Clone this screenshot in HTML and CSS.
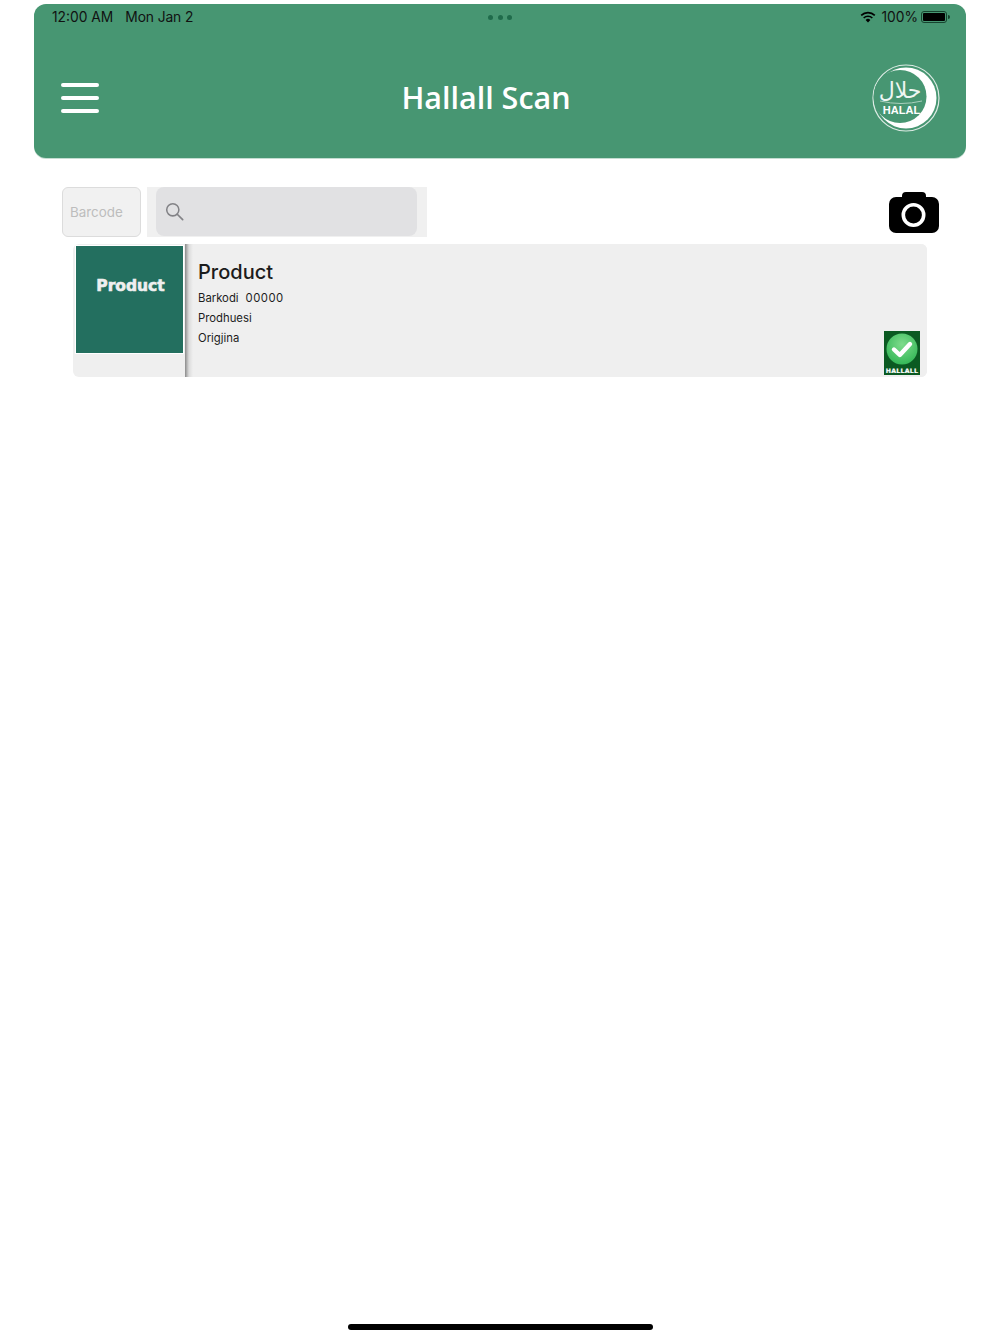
FILE: index.html
```html
<!DOCTYPE html>
<html lang="sq">
<head>
    <meta charset="UTF-8">
    <meta name="viewport" content="width=device-width, initial-scale=1.0">
    <title>Hallall Scan</title>
    <link rel="stylesheet" href="styles.css">
</head>
<body>
    <header class="top">
        <div class="status">
            <div class="status-left">
                <span>12:00 AM</span>
                <span class="date">Mon Jan 2</span>
            </div>
            <div class="dots"><i></i><i></i><i></i></div>
            <div class="status-right">
                <svg class="wifi" viewBox="0 0 16 12" width="16" height="12">
                    <path d="M8 11.6 5.6 9a3.4 3.4 0 0 1 4.8 0Z" fill="#000"/>
                    <path d="M3.7 7a6.2 6.2 0 0 1 8.6 0" fill="none" stroke="#000" stroke-width="1.7"/>
                    <path d="M1.2 4.3a9.8 9.8 0 0 1 13.6 0" fill="none" stroke="#000" stroke-width="1.7"/>
                </svg>
                <span>100%</span>
                <div class="battery"><div class="battery-fill"></div></div>
                <div class="battery-nub"></div>
            </div>
        </div>
        <div class="nav">
            <div class="menu"><span></span><span></span><span></span></div>
            <h1>Hallall Scan</h1>
            <svg class="logo" viewBox="0 0 68 68" width="68" height="68">
                <circle cx="34" cy="34" r="33" fill="none" stroke="#dcebe4" stroke-width="1.2"/>
                <circle cx="34" cy="34" r="30.5" fill="#fff"/>
                <circle cx="28" cy="32.5" r="26.5" fill="#479672"/>
                <text x="28" y="34" class="logo-ar" text-anchor="middle">حلال</text>
                <path d="M8 37q21 5 42 0" fill="none" stroke="#a9d0bd" stroke-width="1"/>
                <text x="29.5" y="50" class="logo-en" text-anchor="middle">HALAL</text>
            </svg>
        </div>
    </header>

    <main class="content">
        <div class="search-row">
            <div class="barcode">Barcode</div>
            <div class="search-wrap">
                <div class="search-box">
                    <svg viewBox="0 0 20 20" width="19" height="19">
                        <circle cx="8.2" cy="8.2" r="6.4" fill="none" stroke="#828286" stroke-width="1.6"/>
                        <path d="M12.9 12.9 18.6 18.6" stroke="#828286" stroke-width="1.8" stroke-linecap="round"/>
                    </svg>
                </div>
            </div>
            <svg class="camera" viewBox="0 0 50 41" width="50" height="41">
                <path fill="#000" d="M17 0h16a4 4 0 0 1 4 4v1h6a7 7 0 0 1 7 7v22a7 7 0 0 1-7 7H7a7 7 0 0 1-7-7V12a7 7 0 0 1 7-7h6V4a4 4 0 0 1 4-4Z"/>
                <circle cx="24.5" cy="23" r="10.2" fill="none" stroke="#fff" stroke-width="3.6"/>
            </svg>
        </div>

        <section class="card">
            <div class="thumb-col">
                <div class="thumb">Product</div>
            </div>
            <div class="info">
                <div class="info-text">
                    <h2>Product</h2>
                    <p><span class="label">Barkodi</span><span class="code">00000</span></p>
                    <p>Prodhuesi</p>
                    <p>Origjina</p>
                </div>
                <svg class="badge" viewBox="0 0 36 44" width="36" height="44">
                    <defs>
                        <radialGradient id="badgeGreen" cx="50%" cy="35%" r="65%">
                            <stop offset="0" stop-color="#7fdc8c"/>
                            <stop offset="1" stop-color="#35b858"/>
                        </radialGradient>
                    </defs>
                    <rect width="36" height="44" fill="#0b5a22"/>
                    <circle cx="18" cy="18" r="15.5" fill="url(#badgeGreen)"/>
                    <path d="M10 18.5 15.8 24 26 13" fill="none" stroke="#fff" stroke-width="4.4" stroke-linecap="round" stroke-linejoin="round"/>
                    <text x="18" y="41.5" class="badge-text" text-anchor="middle">HALLALL</text>
                </svg>
            </div>
        </section>
    </main>

    <div class="home-bar"></div>
</body>
</html>
```

FILE: styles.css
```css
html, body {
    margin: 0;
    padding: 0;
}
body {
    height: 1334px;
    overflow: hidden;
    background: #fff;
    color: #111;
    font-family: Inter, "Liberation Sans", sans-serif;
    display: flex;
    flex-direction: column;
}

/* header */
.top {
    margin: 4px 34px 0;
    height: 154px;
    box-sizing: border-box;
    background: #479672;
    border-radius: 12px;
    box-shadow: 0 1px 0 #c4ddd1;
    padding: 5px 16px 0 18px;
}
.status {
    height: 16px;
    display: flex;
    align-items: center;
    justify-content: space-between;
    font-size: 13.8px;
    position: relative;
}
.status-left {
    display: flex;
    gap: 12px;
}
.date {
    letter-spacing: -0.1px;
}
.dots {
    position: absolute;
    left: 50%;
    top: 6px;
    margin-left: -1px;
    transform: translateX(-50%);
    display: flex;
    gap: 4.5px;
}
.dots i {
    width: 5px;
    height: 5px;
    border-radius: 50%;
    background: #1f6b4b;
}
.status-right {
    display: flex;
    align-items: center;
}
.wifi {
    margin-right: 5px;
}
.battery {
    width: 26px;
    height: 12px;
    box-sizing: border-box;
    border: 1px solid #17432f;
    border-radius: 3px;
    padding: 1px;
    margin-left: 3px;
}
.battery-fill {
    height: 100%;
    background: #000;
    border-radius: 1px;
}
.battery-nub {
    width: 2px;
    height: 4px;
    background: #17432f;
    border-radius: 0 2px 2px 0;
    margin-left: 1px;
}
.nav {
    display: flex;
    align-items: center;
    justify-content: space-between;
    height: 68px;
    margin-top: 39px;
    padding: 0 9px;
}
.menu {
    width: 38px;
    display: flex;
    flex-direction: column;
    gap: 9.5px;
}
.menu span {
    height: 3.5px;
    background: #fff;
    border-radius: 2px;
}
.nav h1 {
    margin: 0 0 2px;
    color: #fff;
    font-family: "Open Sans", sans-serif;
    font-size: 30.5px;
    font-weight: 600;
    position: relative;
    left: -5px;
}
.logo {
    margin-right: -10px;
    position: relative;
    left: -11px;
}
.logo-ar {
    font-family: "DejaVu Sans", sans-serif;
    font-size: 22px;
    fill: #eef6f2;
}
.logo-en {
    font-family: "Liberation Sans", sans-serif;
    font-size: 11px;
    font-weight: 700;
    fill: #fff;
}

/* search */
.content {
    padding: 29px 61px 0 62px;
}
.search-row {
    display: flex;
    align-items: center;
    height: 50px;
}
.barcode {
    width: 79px;
    height: 50px;
    box-sizing: border-box;
    background: #f1f1f1;
    border: 1px solid #dcdcdc;
    border-radius: 6px;
    color: #bdbdbd;
    font-size: 13.4px;
    line-height: 48px;
    padding-left: 7px;
}
.search-wrap {
    width: 280px;
    height: 50px;
    margin-left: 6px;
    box-sizing: border-box;
    padding: 0 10px 0 9px;
    background: #f0f0f0;
}
.search-box {
    height: 49px;
    background: #e1e1e3;
    border-radius: 8px;
    display: flex;
    align-items: center;
    padding-left: 9px;
}
.camera {
    margin-left: auto;
    margin-top: 1px;
}

/* product card */
.card {
    display: flex;
    margin: 7px 12px 0 11px;
    height: 133px;
    background: #efefef;
    border-radius: 6px;
    overflow: hidden;
}
.thumb-col {
    width: 112px;
    padding: 2px 0 0 3px;
    box-sizing: border-box;
}
.thumb {
    width: 107px;
    height: 107px;
    box-sizing: border-box;
    background: #236f5f;
    box-shadow: 0 0 0 1px #fff;
    color: #efefef;
    font-family: "DejaVu Sans", sans-serif;
    font-weight: 700;
    font-size: 15.5px;
    -webkit-text-stroke: 0.6px #efefef;
    text-align: center;
    padding: 31px 0 0 2px;
}
.info {
    flex: 1;
    display: flex;
    justify-content: space-between;
    padding: 0 7px 2px 13px;
    background: linear-gradient(90deg, #8a8a8a 0, #b5b5b5 2px, #dcdcdc 4px, #efefef 8px);
}
.info-text h2 {
    margin: 15px 0 3px;
    font-size: 20px;
    line-height: 26px;
    font-weight: 500;
    color: #1c1c1c;
}
.info-text p {
    margin: 0;
    font-size: 11.3px;
    line-height: 20.1px;
    color: #1c1c1c;
}
.code {
    margin-left: 7px;
    letter-spacing: 0.5px;
}
.badge {
    align-self: flex-end;
}
.badge-text {
    font-family: "DejaVu Sans", sans-serif;
    font-size: 6.2px;
    font-weight: 700;
    letter-spacing: 0.3px;
    stroke: #fff;
    stroke-width: 0.2px;
    fill: #fff;
}

/* bottom indicator */
.home-bar {
    width: 305px;
    height: 6px;
    margin: auto auto 4px;
    background: #000;
    border-radius: 3px;
}
```
